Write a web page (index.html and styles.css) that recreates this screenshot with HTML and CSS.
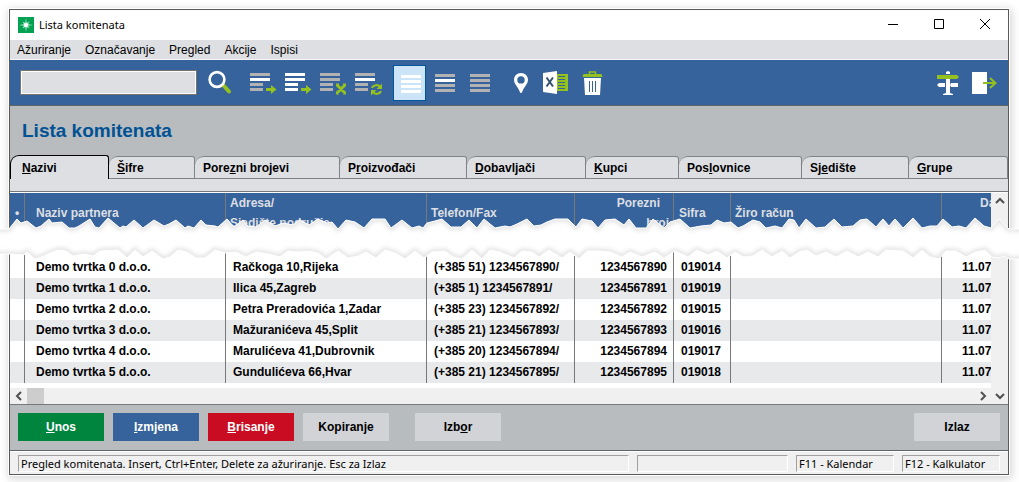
FILE: index.html
```html
<!DOCTYPE html>
<html lang="hr">
<head>
<meta charset="utf-8">
<title>Lista komitenata</title>
<link rel="stylesheet" href="styles.css">
</head>
<body>
<main class="window">
  <header class="titlebar">
    <svg class="logo" viewBox="0 0 16 16" aria-hidden="true"><rect width="16" height="16" fill="#00a251"/><path d="M8 1l.7 5L11.500 4.500 10 7.300 15 8l-5 .7 1.500 2.800-2.800-1.500L8 15l-.7-5-2.800 1.500L6 8.700 1 8l5-.7L4.500 4.500 7.300 6z" fill="#b5e8cc"/><circle cx="8" cy="8" r="2" fill="#fff"/></svg>
    <span class="caption">Lista komitenata</span>
    <button class="winbtn" aria-label="Minimiziraj"><svg viewBox="0 0 12 12"><path d="M1 5.500h10" /></svg></button>
    <button class="winbtn" aria-label="Maksimiziraj"><svg viewBox="0 0 12 12"><path d="M1.500 .5h9v9h-9z"/></svg></button>
    <button class="winbtn" aria-label="Zatvori"><svg viewBox="0 0 12 12"><path d="M1 0l10 10M11 0L1 10"/></svg></button>
  </header>

  <nav class="menubar">
    <button>Ažuriranje</button><button>Označavanje</button><button>Pregled</button><button>Akcije</button><button>Ispisi</button>
  </nav>

  <div class="toolbar">
    <input class="search" type="text" aria-label="Traži">
    <button class="tool find" aria-label="Traži"><svg viewBox="0 0 35 36"><path d="M18 20l6 6.500" stroke="#95c11f" stroke-width="4" stroke-linecap="round"/><circle cx="12" cy="14.500" r="7.400" fill="none" stroke="#fff" stroke-width="2.600"/></svg></button>
    <button class="tool" aria-label="Označi redak"><svg viewBox="0 0 35 36"><path fill="#b2b2b2" d="M4 8h20v3H4zM4 18h13v3H4zM4 23h13v3H4z"/><path fill="#fff" d="M4 13h20v3H4z"/><path fill="#95c11f" d="M20 23h5v-3l5.500 4.500L25 29v-3h-5z"/></svg></button>
    <button class="tool" aria-label="Označi sve"><svg viewBox="0 0 35 36"><path fill="#fff" d="M4 8h20v3H4zM4 13h20v3H4zM4 18h13v3H4zM4 23h13v3H4z"/><path fill="#95c11f" d="M20 23h5v-3l5.500 4.500L25 29v-3h-5z"/></svg></button>
    <button class="tool" aria-label="Poništi oznake"><svg viewBox="0 0 35 36"><path fill="#b2b2b2" d="M4 8h20v3H4zM4 13h20v3H4zM4 18h13v3H4zM4 23h13v3H4z"/><path stroke="#95c11f" stroke-width="3" d="M21 20l8 8M29 20l-8 8M20 20h3M27 20h3M20 28h3M27 28h3"/></svg></button>
    <button class="tool" aria-label="Obrni oznake"><svg viewBox="0 0 35 36"><path fill="#b2b2b2" d="M4 8h20v3H4zM4 18h13v3H4zM4 23h13v3H4z"/><path fill="#fff" d="M4 13h20v3H4z"/><path fill="none" stroke="#95c11f" stroke-width="2.200" d="M21 23c1-3 6-4 8-1M30 26c-1 3-6 4-8 1"/><path fill="#95c11f" d="M31 18.500v5.500h-5.500zM20 30.500V25h5.500z"/></svg></button>
    <button class="tool selected" aria-label="Svi redci"><svg viewBox="0 0 33 36"><path fill="#fff" d="M8 10h20v3H8zM8 15h20v3H8zM8 20h20v3H8zM8 25h20v3H8z"/></svg></button>
    <button class="tool" aria-label="Označeni redci"><svg viewBox="0 0 35 36"><path fill="#b2b2b2" d="M4 9h20v3H4zM4 19h20v3H4zM4 24h20v3H4z"/><path fill="#fff" d="M4 14h20v3H4z"/></svg></button>
    <button class="tool" aria-label="Neoznačeni redci"><svg viewBox="0 0 35 36"><path fill="#b2b2b2" d="M4 9h20v3H4zM4 14h20v3H4zM4 19h20v3H4zM4 24h20v3H4z"/></svg></button>
    <button class="tool" aria-label="Karta"><svg viewBox="0 0 35 36"><path fill="#fff" fill-rule="evenodd" d="M20 8c4.200 0 7 3 7 6.800 0 4.200-3.800 7-5.500 11.200-.5 1.500-.8 2-1.500 2s-1-.5-1.500-2C16.800 21.800 13 19 13 14.800 13 11 15.800 8 20 8zm0 3.200a3.700 3.700 0 1 0 0 7.400 3.700 3.700 0 0 0 0-7.400z"/></svg></button>
    <button class="tool" aria-label="Excel"><svg viewBox="0 0 35 36"><path fill="#95c11f" d="M21 9h11v17H21z"/><path stroke="#36639b" d="M22 11.500h7M22 14.500h7M22 17.500h7M22 20.500h7M22 23.500h7"/><path fill="#fff" d="M7 8l14-2v23L7 27z"/><path d="M10.500 12.500l6.500 9M17 12.500l-6.500 9" stroke="#36506f" stroke-width="2"/></svg></button>
    <button class="tool" aria-label="Briši"><svg viewBox="0 0 35 36"><path fill="none" stroke="#95c11f" stroke-width="1.500" d="M18.500 9V7h6v2"/><path fill="#95c11f" d="M12.500 9h18l1 3h-20z"/><path fill="#fff" d="M13 13h17l-1 17H14z"/><path stroke="#36639b" stroke-width="1" d="M18.500 16v11M21.500 16v11M24.500 16v11"/></svg></button>
    <span class="spacer"></span>
    <button class="tool" aria-label="Putokaz"><svg viewBox="0 0 35 36"><path fill="#fff" d="M15 7l2-1 2 1v2h-4zM15 14h4v14l3 1v1H12v-1l3-1z"/><path fill="#fff" d="M8 18h6v4H8l-2-2zM20 18h7v4h-7l-1-2z"/><path fill="#95c11f" d="M6 10h20l2 2-2 2H6z"/></svg></button>
    <button class="tool" aria-label="Izlaz iz prozora"><svg viewBox="0 0 35 36"><path fill="#fff" d="M6 7h15v22H6z"/><path fill="none" stroke="#95c11f" stroke-width="2" d="M17 18h12M24 13l5.500 5L24 23"/></svg></button>
  </div>

  <h1 class="heading">Lista komitenata</h1>

  <div class="tabs" role="tablist">
    <button class="tab active" role="tab" aria-selected="true"><u>N</u>azivi</button>
    <button class="tab" role="tab"><u>Š</u>ifre</button>
    <button class="tab" role="tab">Pore<u>z</u>ni brojevi</button>
    <button class="tab" role="tab">P<u>r</u>oizvođači</button>
    <button class="tab" role="tab"><u>D</u>obavljači</button>
    <button class="tab" role="tab"><u>K</u>upci</button>
    <button class="tab" role="tab">Pos<u>l</u>ovnice</button>
    <button class="tab" role="tab">Sj<u>e</u>dište</button>
    <button class="tab" role="tab"><u>G</u>rupe</button>
  </div>
  <div class="tabpanel"></div>

  <section class="grid">
    <div class="rows">
      <table>
        <colgroup><col class="c-mark"><col class="c-name"><col class="c-addr"><col class="c-tel"><col class="c-tax"><col class="c-code"><col class="c-acct"><col class="c-date"></colgroup>
        <thead>
          <tr><th>•</th><th>Naziv partnera</th><th>Adresa/<br>Sjedište područja</th><th>Telefon/Fax</th><th><span class="first">Porezni</span><br>broj</th><th>Sifra</th><th>Žiro račun</th><th>Da<br>&nbsp;</th></tr>
        </thead>
        <tbody>
          <tr class="cut"><td></td><td></td><td></td><td></td><td></td><td></td><td></td><td></td></tr>
          <tr><td></td><td>Demo tvrtka 0 d.o.o.</td><td>Račkoga 10,Rijeka</td><td>(+385 51) 1234567890/</td><td>1234567890</td><td>019014</td><td></td><td>11.07</td></tr>
          <tr><td></td><td>Demo tvrtka 1 d.o.o.</td><td>Ilica 45,Zagreb</td><td>(+385 1) 1234567891/</td><td>1234567891</td><td>019019</td><td></td><td>11.07</td></tr>
          <tr><td></td><td>Demo tvrtka 2 d.o.o.</td><td>Petra Preradovića 1,Zadar</td><td>(+385 23) 1234567892/</td><td>1234567892</td><td>019015</td><td></td><td>11.07</td></tr>
          <tr><td></td><td>Demo tvrtka 3 d.o.o.</td><td>Mažuranićeva 45,Split</td><td>(+385 21) 1234567893/</td><td>1234567893</td><td>019016</td><td></td><td>11.07</td></tr>
          <tr><td></td><td>Demo tvrtka 4 d.o.o.</td><td>Marulićeva 41,Dubrovnik</td><td>(+385 20) 1234567894/</td><td>1234567894</td><td>019017</td><td></td><td>11.07</td></tr>
          <tr><td></td><td>Demo tvrtka 5 d.o.o.</td><td>Gundulićeva 66,Hvar</td><td>(+385 21) 1234567895/</td><td>1234567895</td><td>019018</td><td></td><td>11.07</td></tr>
        </tbody>
      </table>
    </div>
    <div class="vscroll"><button class="arrow" aria-label="Gore"><svg viewBox="0 0 10 10"><path d="M1 7l4-4 4 4"/></svg></button></div>
    <svg class="tear" viewBox="9 216 1000 46" preserveAspectRatio="none" aria-hidden="true">
      <defs>
        <filter id="soft" x="-5%" y="-50%" width="110%" height="200%"><feGaussianBlur stdDeviation="2"/></filter>
        <path id="gap" d="M-20 229H9L17 219 21 223 27 221 36 228 41 226 49 219 52 223 62 222 69 228 75 228 79 226 90 219 95 227 99 228 108 218 120 228 123 226 126 227 134 220 143 228 154 220 164 226 169 224 176 220 185 228 188 226 194 228 201 220 206 225 215 226 218 227 227 219 234 227 243 220 248 226 256 227 265 220 275 226 283 223 293 225 300 220 309 225 318 219 327 223 332 222 338 229 346 220 355 222 364 228 372 219 385 219 391 228 402 220 412 228 419 226 423 228 427 223 435 221 442 219 451 227 461 227 469 220 477 228 484 219 495 228 505 226 510 227 517 224 527 219 534 226 541 225 547 222 555 219 568 219 576 227 582 219 592 221 598 228 605 220 615 219 624 225 629 219 636 228 646 228 653 219 664 228 670 222 680 219 690 228 701 226 711 225 717 220 724 223 731 222 738 228 743 226 753 220 760 222 766 228 775 226 782 228 789 219 794 220 799 228 806 219 816 228 825 227 834 219 842 227 853 226 860 220 867 219 876 227 883 219 889 226 895 219 903 228 913 218 922 228 930 226 937 226 943 219 952 227 959 226 966 228 975 218 984 226 991 228 999 219 1009 229H1040V259H1009L1004 256 999 258 992 257 985 250 976 252 966 257 956 251 946 251 939 259 930 257 922 250 913 258 903 251 886 250 878 257 868 252 858 257 847 251 836 257 826 252 816 256 807 250 799 252 790 258 782 251 772 257 762 250 753 256 743 257 735 252 727 258 717 251 708 255 697 250 688 257 675 251 664 258 655 252 642 257 630 252 622 257 610 252 597 251 587 251 579 259 570 252 562 258 549 250 539 257 532 252 522 251 514 258 500 252 490 250 482 259 472 250 462 259 453 257 445 251 432 252 424 258 415 251 405 259 395 253 385 250 376 258 366 252 358 256 348 258 338 251 326 259 318 253 308 251 298 252 288 251 280 257 268 254 256 252 246 257 236 252 225 253 215 250 205 258 196 258 187 252 178 250 170 257 163 259 152 251 143 257 135 250 127 258 118 250 100 251 93 256 84 254 73 256 66 251 58 250 50 253 42 257 35 259 27 252 24 255 9 254H-20Z"/>
        <clipPath id="band"><use href="#gap"/></clipPath>
      </defs>
      <use href="#gap" class="tear-fill"/>
      <g clip-path="url(#band)"><use href="#gap" class="tear-shade" filter="url(#soft)"/></g>
      <use href="#gap" class="tear-edge"/>
    </svg>
  </section>
  <div class="hscroll">
    <button class="arrow" aria-label="Lijevo"><svg viewBox="0 0 10 10"><path d="M7 1L3 5l4 4"/></svg></button>
    <span class="thumb"></span>
    <span class="spacer"></span>
    <button class="arrow" aria-label="Desno"><svg viewBox="0 0 10 10"><path d="M3 1l4 4-4 4"/></svg></button>
    <button class="arrow" aria-label="Dolje"><svg viewBox="0 0 10 10"><path d="M1 3l4 4 4-4"/></svg></button>
  </div>

  <div class="actions">
    <button class="act green"><u>U</u>nos</button>
    <button class="act blue"><u>I</u>zmjena</button>
    <button class="act red"><u>B</u>risanje</button>
    <button class="act">Kopiranje</button>
    <button class="act apart">Izb<u>o</u>r</button>
    <span class="spacer"></span>
    <button class="act">Izlaz</button>
  </div>

  <footer class="status">
    <span class="cell grow">Pregled komitenata. Insert, Ctrl+Enter, Delete za ažuriranje. Esc za Izlaz</span>
    <span class="cell mid"></span>
    <span class="cell">F11 - Kalendar</span>
    <span class="cell">F12 - Kalkulator</span>
  </footer>
</main>
</body>
</html>
```
FILE: styles.css
```css
* { box-sizing: border-box; }
html { overflow-x: clip; }
body {
  margin: 0;
  padding: 9px 10px 8px 9px;
  background: #fff;
  font: 12px/14px "Liberation Sans", Arial, sans-serif;
  color: #000;
}
button {
  margin: 0;
  padding: 0;
  border: 0;
  background: none;
  font: inherit;
  color: inherit;
}
svg { display: block; }
u { text-underline-offset: 1px; }
.spacer { flex: 1; }

.window {
  border: 1px solid #595959;
  background: #b8bcbf;
  box-shadow: 0 0 0 1px #fff, 1px 2px 8px 2px rgba(0, 0, 0, .16);
}

.titlebar {
  display: flex;
  align-items: center;
  height: 30px;
  padding-left: 8px;
  background: #fff;
}
.logo { width: 16px; height: 16px; }
.caption {
  flex: 1;
  margin-left: 5px;
  font: 11px/16px "Noto Sans", "Open Sans", sans-serif;
}
.winbtn {
  display: flex;
  justify-content: center;
  width: 46px;
}
.winbtn svg { width: 12px; height: 12px; fill: none; stroke: #000; }

.menubar {
  display: flex;
  gap: 14px;
  height: 20px;
  padding: 0 7px;
  background: #dedfe3;
  border-bottom: 1px solid #f4f4f6;
}

.toolbar {
  display: flex;
  align-items: center;
  height: 46px;
  padding: 0 7px 0 10px;
  background: #36639b;
  border-bottom: 1px solid #5f6468;
}
.search {
  width: 177px;
  height: 25px;
  padding: 0 4px;
  border: 1px solid #77746f;
  box-shadow: inset 0 0 0 1px #fff;
  background: #dedfe3;
  font: inherit;
}
.tool { width: 35px; height: 36px; }
.tool svg { width: 100%; height: 36px; }
.find { margin: 0 6px 0 8px; }
.selected {
  width: 33px;
  margin: 0 5px 0 7px;
  background: #cce4f7;
  box-shadow: inset 0 0 0 1px #00549a;
}

.heading {
  margin: 0;
  padding: 14px 12px 13px;
  font: bold 19px/22px "Liberation Sans", Arial, sans-serif;
  color: #005294;
}

.tabs {
  display: grid;
  grid-template-columns: 99fr 86fr 145fr 127fr 119fr 93fr 123fr 107fr 99fr;
  align-items: end;
}
.tab {
  height: 23px;
  padding-left: 8px;
  border: 1px solid #808285;
  border-left: 0;
  border-radius: 9px 3px 0 0;
  background: #dedfe3;
  font-weight: bold;
  text-align: left;
}
.tab.active {
  height: 24px;
  padding-left: 11px;
  border: 1px solid #000;
  border-bottom: 0;
}
.tabpanel {
  height: 13px;
  background: #dedfe3;
  border-bottom: 1px solid #77787a;
}

.grid {
  position: relative;
  display: flex;
  border-top: 1px solid #fff;
}
.rows {
  flex: 1;
  min-width: 0;
  overflow: hidden;
  padding-bottom: 5px;
  background: #fff;
}
table {
  width: 982px;
  table-layout: fixed;
  border-collapse: separate;
  border-spacing: 0;
  font-weight: bold;
  white-space: nowrap;
}
.c-mark { width: 15px; }
.c-name { width: 201px; }
.c-addr { width: 201px; }
.c-tel { width: 148px; }
.c-tax { width: 99px; }
.c-code { width: 57px; }
.c-acct { width: 211px; }
th, td { padding: 0; border-right: 1px solid #77787a; line-height: 21px; }
th:last-child, td:last-child { border-right: 0; }
th {
  height: 40px;
  padding-left: 5px;
  background: #36639b;
  color: #dedfe3;
  line-height: 20px;
  text-align: left;
}
td { height: 21px; padding-left: 7px; }
tbody tr:nth-child(odd) td { background: #e8e9eb; }
tbody tr.cut td { height: 24px; background: #fff; }
th:nth-child(2), td:nth-child(2) { padding-left: 11px; }
th:nth-child(3), th:nth-child(4), th:nth-child(7) { padding-left: 4px; }
td:nth-child(5) { padding-right: 6px; text-align: right; }
th:nth-child(5) { padding-right: 4px; text-align: right; }
.first { padding-right: 9px; }
th:nth-child(8) { padding-left: 38px; }
td:nth-child(8) { padding-left: 20px; }

.vscroll { width: 17px; background: #f0f0f0; }
.arrow {
  display: flex;
  align-items: center;
  justify-content: center;
  width: 17px;
  height: 16px;
}
.arrow svg { width: 10px; height: 10px; fill: none; stroke: #505050; stroke-width: 2; }
.tear {
  position: absolute;
  left: -1px;
  top: 23px;
  width: calc(100% + 2px);
  height: 46px;
  overflow: visible;
}
.tear-fill { fill: #fff; }
.tear-shade { fill: none; stroke: #e2e2e2; stroke-width: 5; }
.tear-edge { fill: none; stroke: #fff; stroke-width: 1; }

.hscroll {
  display: flex;
  height: 17px;
  background: #f0f0f0;
  border-bottom: 1px solid #77787a;
}
.thumb { width: 17px; background: #cdcdcd; }

.actions {
  display: flex;
  gap: 9px;
  padding: 8px 8px 9px;
  border-bottom: 1px solid #5f6468;
}
.act {
  width: 86px;
  height: 28px;
  background: #d2d3d7;
  font-weight: bold;
}
.green { background: #00853f; color: #fff; }
.blue { background: #36639b; color: #fff; }
.red { background: #c90c21; color: #fff; }
.apart { margin-left: 17px; }

.status {
  display: flex;
  gap: 8px;
  padding: 3px 8px 2px;
  background: #f0f0f0;
  border-top: 1px solid #fff;
}
.cell {
  width: 98px;
  height: 17px;
  padding-left: 2px;
  border: 1px solid #fff;
  border-top-color: #a0a0a0;
  border-left-color: #a0a0a0;
  font: 11px/16px "Noto Sans", "Open Sans", sans-serif;
  white-space: nowrap;
}
.grow { flex: 1; }
.mid { width: 151px; }
```
